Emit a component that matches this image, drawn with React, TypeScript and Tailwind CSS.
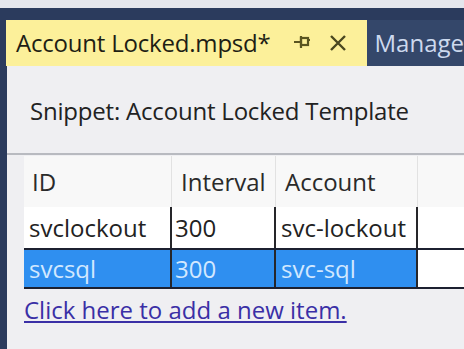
import React from 'react';

const rows = [
  { id: 'svclockout', interval: '300', account: 'svc-lockout', selected: false },
  { id: 'svcsql', interval: '300', account: 'svc-sql', selected: true },
];

const PinIcon = () => (
  <svg width="18" height="14" viewBox="0 0 18 14" className="text-[#5a5520]">
    <rect x="8" y="3" width="7" height="7" fill="none" stroke="currentColor" strokeWidth="2.2" />
    <path d="M1 7h7M8 1v12M15 5h2" stroke="currentColor" strokeWidth="2.2" fill="none" />
  </svg>
);

const CloseIcon = () => (
  <svg width="18" height="18" viewBox="0 0 18 18" className="text-[#4a4820]">
    <path d="M2 2l14 14M16 2L2 16" stroke="currentColor" strokeWidth="2.4" fill="none" />
  </svg>
);

export default function App() {
  return (
    <div
      className="w-[464px] h-[349px] bg-[#2b3b5d] flex flex-col overflow-hidden"
      style={{ fontFamily: '"Open Sans", "Noto Sans", sans-serif' }}
    >
      <div className="h-[8px] bg-[#e4e6ec]" />
      <div className="flex items-end pl-[6px] pt-[12px]">
        <div className="w-[364px] h-[46px] bg-[#fcf09a] flex items-center pl-[10px]">
          <span className="text-[24px] text-[#1e1e14] tracking-[-0.2px] whitespace-nowrap">Account Locked.mpsd*</span>
          <span className="ml-[22px] mt-[-2px]"><PinIcon /></span>
          <span className="ml-[18px]"><CloseIcon /></span>
        </div>
        <div className="flex-1 h-[46px] bg-[#34476a] flex items-center pl-[8px]">
          <span className="text-[24px] text-[#cdd9ee] whitespace-nowrap">Manage</span>
        </div>
      </div>
      <div className="flex-1 ml-[7px] bg-[#efeff2] flex flex-col">
        <div className="h-[87px] flex items-center pl-[23px] pt-[2px]">
          <span className="text-[24px] text-[#222] tracking-[-0.2px] whitespace-nowrap">Snippet: Account Locked Template</span>
        </div>
        <div className="h-[2px] bg-[#b8bac0]" />
        <div className="pl-[17px] pt-[1px]">
          <div className="flex h-[51px] bg-[#f8f8f8] text-[24px] text-[#2a2a2a]">
            <div className="w-[148px] flex items-center pl-[8px] border-r border-[#e2e2e2]">ID</div>
            <div className="w-[104px] flex items-center pl-[9px] border-r border-[#e2e2e2]">Interval</div>
            <div className="w-[142px] flex items-center pl-[9px] border-r border-[#e2e2e2]">Account</div>
            <div className="flex-1" />
          </div>
          {rows.map((r) => (
            <div
              key={r.id}
              className={
                r.selected
                  ? 'flex h-[41px] text-[24px] border-t-2 border-b-2 border-[#1c2030] text-[#d2e8ff]'
                  : 'flex h-[41px] text-[24px] text-[#222]'
              }
            >
              <div className={(r.selected ? 'bg-[#2f8ff0] ' : 'bg-white ') + 'w-[148px] flex items-center pl-[5px] border-r-2 border-[#26262a] whitespace-nowrap'}>{r.id}</div>
              <div className={(r.selected ? 'bg-[#2f8ff0] ' : 'bg-white ') + 'w-[104px] flex items-center pl-[3px] border-r-2 border-[#26262a]'}>{r.interval}</div>
              <div className={(r.selected ? 'bg-[#2f8ff0] ' : 'bg-white ') + 'w-[142px] flex items-center pl-[5px] border-r-2 border-[#26262a] whitespace-nowrap overflow-hidden'}>{r.account}</div>
              <div className="flex-1 bg-white" />
            </div>
          ))}
          <div className="pt-[3px]">
            <span className="text-[24px] text-[#3a2fa6] underline underline-offset-2 whitespace-nowrap">Click here to add a new item.</span>
          </div>
        </div>
      </div>
    </div>
  );
}
